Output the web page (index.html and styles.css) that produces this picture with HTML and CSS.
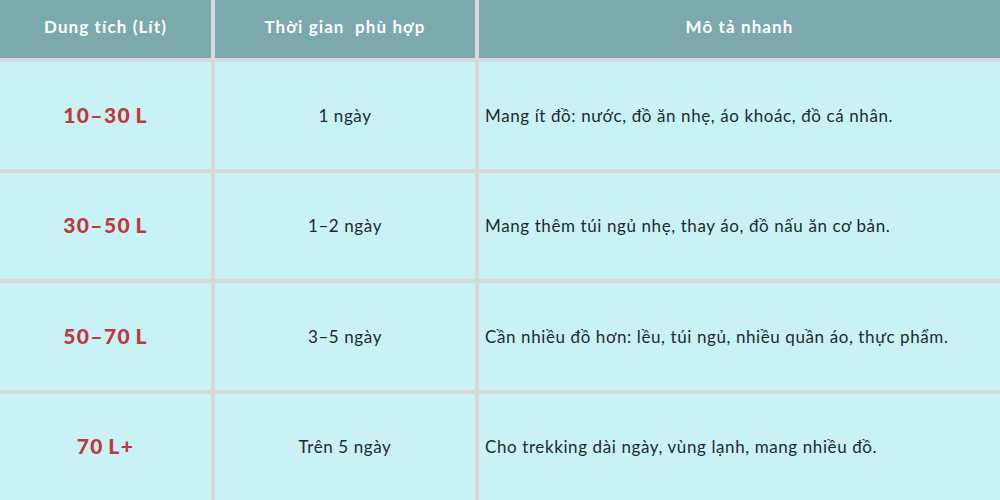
FILE: index.html
```html
<!DOCTYPE html>
<html lang="vi">
<head>
<meta charset="utf-8">
<link rel="stylesheet" href="styles.css">
</head>
<body>
<div class="table">
  <div class="th">Dung tích (Lít)</div>
  <div class="th">Thời gian&nbsp; phù hợp</div>
  <div class="th">Mô tả nhanh</div>

  <div class="td size">10–30 L</div>
  <div class="td center">1 ngày</div>
  <div class="td desc">Mang ít đồ: nước, đồ ăn nhẹ, áo khoác, đồ cá nhân.</div>

  <div class="td size">30–50 L</div>
  <div class="td center">1–2 ngày</div>
  <div class="td desc">Mang thêm túi ngủ nhẹ, thay áo, đồ nấu ăn cơ bản.</div>

  <div class="td size">50–70 L</div>
  <div class="td center">3–5 ngày</div>
  <div class="td desc">Cần nhiều đồ hơn: lều, túi ngủ, nhiều quần áo, thực phẩm.</div>

  <div class="td size">70 L+</div>
  <div class="td center">Trên 5 ngày</div>
  <div class="td desc">Cho trekking dài ngày, vùng lạnh, mang nhiều đồ.</div>
</div>
</body>
</html>
```

FILE: styles.css
```css
html, body {
  margin: 0;
  padding: 0;
}
body {
  width: 1000px;
  height: 500px;
  overflow: hidden;
  font-family: "Lato", "Noto Sans", sans-serif;
}
.table {
  display: grid;
  grid-template-columns: 211px 260px 521px;
  grid-template-rows: 58px 1fr 1fr 1fr 1fr;
  column-gap: 4px;
  row-gap: 4px;
  width: 1000px;
  height: 500px;
  background: #d7d9d8;
}
.th {
  background: #7ca9ae;
  color: #ffffff;
  font-weight: 700;
  font-size: 17px;
  letter-spacing: 1.1px;
  display: flex;
  align-items: center;
  justify-content: center;
  padding-bottom: 5px;
}
.td {
  background: #c9f2f4;
  color: #1f2a30;
  font-size: 17px;
  letter-spacing: 0.6px;
  display: flex;
  align-items: center;
}
.center {
  justify-content: center;
}
.size {
  justify-content: center;
  color: #c0383c;
  font-weight: 900;
  font-size: 21px;
  letter-spacing: 1.4px;
  word-spacing: -2px;
  padding-bottom: 2px;
}
.desc {
  padding-left: 6px;
}
```
